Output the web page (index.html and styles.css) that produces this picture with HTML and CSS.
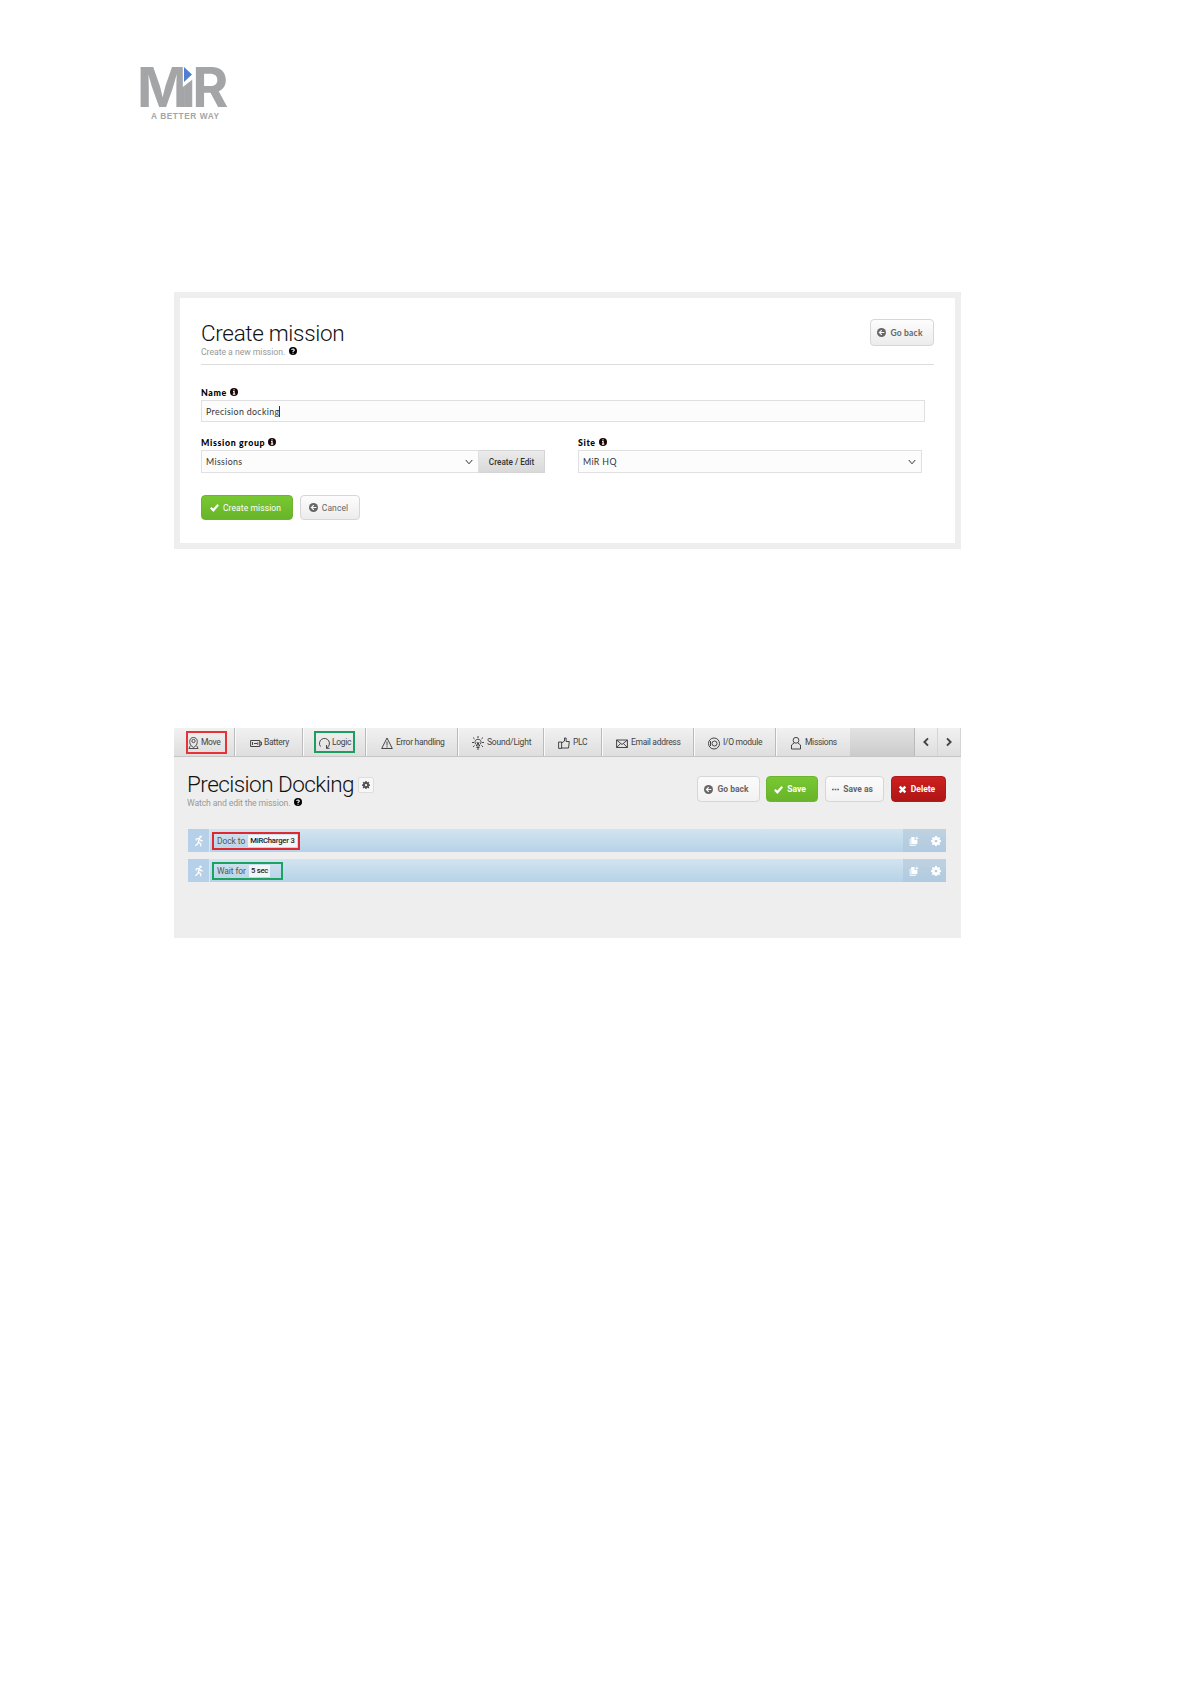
FILE: index.html
```
<!DOCTYPE html>
<html lang="en">
<head>
    <meta charset="UTF-8">
    <meta name="viewport" content="width=device-width, initial-scale=1.0">
    <title>Create mission</title>
    <link rel="stylesheet" href="styles.css">
</head>
<body>
    <!-- Shared icons -->
    <svg class="sprite" width="0" height="0">
        <symbol id="help" viewBox="0 0 16 16"><circle cx="8" cy="8" r="8"/><path d="M5.5 6.2a2.5 2.3 0 1 1 3.7 2Q8 8.800 8 10M8 11.300v2" fill="none" stroke="#fff" stroke-width="2.200"/></symbol>
        <symbol id="info" viewBox="0 0 16 16"><circle cx="8" cy="8" r="8"/><path d="M8 2.500v2.300M6 7h2.200v5M5.700 12.300h4.800" fill="none" stroke="#fff" stroke-width="2.200"/></symbol>
        <symbol id="back" viewBox="0 0 16 16"><circle cx="8" cy="8" r="8"/><path d="M13 8H5M8.500 3.800L4.300 8l4.200 4.200" fill="none" stroke="#f7f7f7" stroke-width="2.200"/></symbol>
        <symbol id="check" viewBox="0 0 16 16"><path d="M1.500 8.500L6 13 14.500 3" fill="none" stroke="currentColor" stroke-width="3.800"/></symbol>
        <symbol id="cross" viewBox="0 0 16 16"><path d="M3 3l10 10M13 3L3 13" fill="none" stroke="currentColor" stroke-width="4.400"/></symbol>
        <symbol id="dots" viewBox="0 0 16 16"><path d="M0 6.500h4v3H0zM6 6.500h4v3H6zM12 6.500h4v3h-4z"/></symbol>
        <symbol id="down" viewBox="0 0 16 16"><path d="M1.500 4L8 11.500 14.500 4" fill="none" stroke="currentColor" stroke-width="2"/></symbol>
        <symbol id="gear" viewBox="0 0 16 16"><path fill-rule="evenodd" d="M6.700 0h2.600l.4 2.100 1.400.6 1.800-1.200 1.800 1.800-1.200 1.800.6 1.400 2 .4v2.500l-2 .4-.6 1.400 1.200 1.800-1.800 1.800-1.800-1.200-1.400.6-.4 2H6.700l-.4-2-1.400-.6-1.800 1.200L1.300 13l1.200-1.800-.6-1.400L0 9.400V6.900l2-.4.600-1.400-1.200-1.800 1.800-1.800L5 2.700l1.300-.6zM8 5.800a2.300 2.300 0 1 0 0 4.600 2.300 2.300 0 0 0 0-4.600z"/></symbol>
        <symbol id="runner" viewBox="0 0 16 18"><circle cx="10.500" cy="2" r="2"/><path d="M3.500 8V5.800L8.500 4.800 7 11l3.500 2.200.5 4.300M7 10.500L5.500 14 2 16.500M9 6l2 2.500 3.500.5" fill="none" stroke="currentColor" stroke-width="2"/></symbol>
        <symbol id="copy" viewBox="0 0 16 18"><path d="M3 2h6v5h5v8H3z"/><path d="M1 5v12h10M10 4h6M13 1v6" fill="none" stroke="currentColor" stroke-width="1.500"/></symbol>
    </svg>

    <header class="logo">
        <svg width="100" height="76" viewBox="-4 -16 100 76">
            <text class="logo-name" x="-3" y="41" dx="0 -2.400 1.400">MiR</text>
            <path d="M42.800-2h10.300v15l-10.300 8z" fill="#fff"/>
            <path d="M44 1l8 7.500-8 7.500z" fill="#4f7fd0"/>
            <text class="logo-tag" x="11" y="53.300" textLength="68">A BETTER WAY</text>
        </svg>
    </header>

    <section class="create-panel">
        <div class="panel-head">
            <div>
                <h1>Create mission</h1>
                <p class="sub">Create a new mission. <svg class="ic-help"><use href="#help"/></svg></p>
            </div>
            <button class="btn btn-back"><svg class="ic"><use href="#back"/></svg>Go back</button>
        </div>
        <div class="field">
            <label>Name <svg class="ic-info"><use href="#info"/></svg></label>
            <div class="input name-input">Precision docking<span class="caret"></span></div>
        </div>
        <div class="field-row">
            <div class="field group-field">
                <label>Mission group <svg class="ic-info"><use href="#info"/></svg></label>
                <div class="select-wrap">
                    <div class="input select">Missions<svg class="ic-down"><use href="#down"/></svg></div>
                    <button class="edit">Create / Edit</button>
                </div>
            </div>
            <div class="field site-field">
                <label>Site <svg class="ic-info"><use href="#info"/></svg></label>
                <div class="input select">MiR HQ<svg class="ic-down"><use href="#down"/></svg></div>
            </div>
        </div>
        <div class="form-buttons">
            <button class="btn btn-green btn-create"><svg class="ic"><use href="#check"/></svg>Create mission</button>
            <button class="btn btn-cancel"><svg class="ic"><use href="#back"/></svg>Cancel</button>
        </div>
    </section>

    <section class="editor">
        <nav class="tabs">
            <div class="tab tab-move">
                <span class="mark mark-red"></span>
                <svg viewBox="0 0 12 14"><path d="M3 9.500C1 6 1.500 1 6 1s5 5 3 8.500L6 12zM2.500 10L1 13h10l-1.500-3"/><circle cx="6" cy="4.800" r="1.800"/></svg>Move
            </div>
            <div class="tab tab-battery">
                <svg viewBox="0 0 12 14"><path d="M.6 4.500h9.200v6H.6zM9.800 6h1.600v3H9.800M2.500 6v3M4 7.500h3M7.800 6.300v2.500"/></svg>Battery
            </div>
            <div class="tab tab-logic">
                <span class="mark mark-green"></span>
                <svg viewBox="0 0 12 14"><path d="M2.500 10.500A5 5 0 1 1 8.500 12M8.500 9v3.300h3"/></svg>Logic
            </div>
            <div class="tab tab-error">
                <svg viewBox="0 0 12 14"><path d="M6 2L.7 12.500h10.600zM6 5.500v4M6 10.300v1.200"/></svg>Error handling
            </div>
            <div class="tab tab-sound">
                <svg viewBox="0 0 12 14"><path d="M4.500 10V8.800a3 3 0 1 1 3 0V10zM4.500 11.500h3M5 13h2M6 0v2M1 1.500l1.600 1.500M11 1.500L9.400 3M0 6.500h2M10 6.500h2M1 11l1.500-1.500M11 11L9.500 9.500M5 6l1 3 1-3"/></svg>Sound/Light
            </div>
            <div class="tab tab-plc">
                <svg viewBox="0 0 12 14"><path d="M.6 6h3v6.400h-3zM3.600 7L6.500 5V2h1.600v3.500h3.200L10.500 12H3.600"/></svg>PLC
            </div>
            <div class="tab tab-email">
                <svg viewBox="0 0 12 14"><path d="M.6 4h10.800v7.500H.6zL6 8.500 11.400 4M.6 11.500l4-4M11.400 11.500l-4-4"/></svg>Email address
            </div>
            <div class="tab tab-io">
                <svg viewBox="0 0 12 14"><circle cx="6" cy="7.500" r="5.500"/><circle cx="6.500" cy="7.500" r="2.500"/><path d="M2.500 5v5"/></svg>I/O module
            </div>
            <div class="tab tab-missions">
                <svg viewBox="0 0 12 14"><circle cx="6" cy="4.300" r="2.900"/><path d="M4 7L1.500 9v4h9V9L8 7"/></svg>Missions
            </div>
            <div class="tab-gap"></div>
            <div class="tab-arrow"><svg viewBox="0 0 10 12"><path d="M7.500 1.500L3 6l4.500 4.500"/></svg></div>
            <div class="tab-arrow"><svg viewBox="0 0 10 12"><path d="M2.500 1.500L7 6l-4.500 4.500"/></svg></div>
        </nav>
        <div class="editor-head">
            <div>
                <h1>Precision Docking<button class="gear-btn"><svg><use href="#gear"/></svg></button></h1>
                <p class="sub">Watch and edit the mission. <svg class="ic-help"><use href="#help"/></svg></p>
            </div>
            <div class="actions">
                <button class="btn a-back"><svg class="ic"><use href="#back"/></svg>Go back</button>
                <button class="btn btn-green a-save"><svg class="ic"><use href="#check"/></svg>Save</button>
                <button class="btn a-saveas"><svg class="ic"><use href="#dots"/></svg>Save as</button>
                <button class="btn btn-red a-delete"><svg class="ic"><use href="#cross"/></svg>Delete</button>
            </div>
        </div>
        <div class="step">
            <div class="step-icon"><svg><use href="#runner"/></svg></div>
            <div class="step-text outline-red">Dock to <span class="chip">MiRCharger 3</span></div>
            <div class="step-tools"><svg><use href="#copy"/></svg><svg><use href="#gear"/></svg></div>
        </div>
        <div class="step">
            <div class="step-icon"><svg><use href="#runner"/></svg></div>
            <div class="step-text outline-green">Wait for <span class="chip">5 sec</span></div>
            <div class="step-tools"><svg><use href="#copy"/></svg><svg><use href="#gear"/></svg></div>
        </div>
    </section>
</body>
</html>
```
FILE: styles.css
```
* {
    margin: 0;
    padding: 0;
    box-sizing: border-box;
}

body {
    background: #fff;
    font-family: Roboto, "Liberation Sans", sans-serif;
    font-size: 8.5px;
    color: #333;
    min-height: 1684px;
}

.sprite {
    position: absolute;
}

svg {
    flex: none;
    fill: currentColor;
}

.logo {
    padding: 50px 0 0 136px;
    height: 292px;
}

.logo-name {
    font: 700 55px Inter, sans-serif;
    letter-spacing: -5px;
    fill: #a3a5a6;
}

.logo-tag {
    font: 700 8.3px "Liberation Sans", sans-serif;
    fill: #a3a5a6;
}

h1 {
    display: flex;
    align-items: center;
    font-size: 22.5px;
    font-weight: 300;
    line-height: 26px;
    letter-spacing: -0.33px;
    color: #111;
}

.sub {
    display: flex;
    align-items: center;
    gap: 4px;
    line-height: 12px;
    font-size: 8.7px;
    letter-spacing: -0.05px;
    color: #999;
}

.ic-help {
    width: 8px;
    height: 8px;
    color: #000;
    margin-top: -2px;
}

/* buttons */
.btn {
    display: flex;
    align-items: center;
    justify-content: center;
    gap: 4px;
    height: 26px;
    padding-right: 4px;
    border: 1px solid #d6d6d6;
    border-radius: 4px;
    background: linear-gradient(#fdfdfd, #ececec);
    font-family: inherit;
    font-size: 8.5px;
    font-weight: 500;
    color: #666;
    white-space: nowrap;
}

.ic {
    width: 9px;
    height: 9px;
}

.btn-green {
    background: linear-gradient(#78c832, #68b42a);
    border-color: #6cb62f;
    color: #fff;
}

.btn-red {
    background: linear-gradient(#cc2020, #b01515);
    border-color: #b01a1a;
    color: #fff;
}

/* create form */
.create-panel {
    width: 787px;
    height: 257px;
    margin-left: 174px;
    border: 6px solid #eee;
    padding: 21px 21px 0;
}

.panel-head {
    display: flex;
    justify-content: space-between;
    height: 46px;
    border-bottom: 1px solid #ddd;
}

.panel-head h1 {
    padding-top: 1px;
}

.btn-back {
    width: 64px;
    height: 27px;
    font-family: Lato, sans-serif;
    font-weight: 700;
    letter-spacing: 0.2px;
}

.field label {
    display: flex;
    align-items: center;
    gap: 3px;
    height: 13px;
    padding-bottom: 1px;
    line-height: 12px;
    font-family: Lato, sans-serif;
    font-size: 8.8px;
    font-weight: 900;
    letter-spacing: 0.65px;
    color: #000;
}

.ic-info {
    width: 8px;
    height: 8px;
    color: #1a0505;
    margin-top: -2px;
}

.panel-head + .field {
    margin-top: 22px;
}

.input {
    display: flex;
    align-items: center;
    height: 22px;
    padding-left: 4px;
    border: 1px solid #e0e0e0;
    background: #fcfcfc;
    font-family: Lato, sans-serif;
    font-size: 8.8px;
    letter-spacing: 0.35px;
    color: #333;
}

.name-input {
    width: 724px;
}

.caret {
    width: 1px;
    height: 11px;
    background: #333;
}

.field-row {
    display: flex;
    margin-top: 15px;
}

.group-field {
    width: 344px;
    margin-right: 33px;
}

.site-field {
    width: 344px;
}

.select-wrap {
    display: flex;
}

.select {
    flex: 1;
    height: 23px;
    justify-content: space-between;
    padding-right: 5px;
}

.ic-down {
    width: 8px;
    height: 8px;
}

.edit {
    width: 66px;
    border: 1px solid #d5d5d5;
    border-left: 0;
    background: linear-gradient(#ebebeb, #d9d9d9);
    font: 500 8.2px Roboto, sans-serif;
    color: #333;
}

.form-buttons {
    display: flex;
    gap: 7px;
    margin-top: 22px;
}

.form-buttons .btn {
    height: 25px;
    padding-right: 3px;
    font-weight: 400;
    letter-spacing: 0.1px;
}

.btn-create {
    width: 92px;
}

.btn-cancel {
    width: 60px;
}

/* mission editor */
.editor {
    width: 787px;
    height: 210px;
    margin: 179px 0 0 174px;
    background: #eee;
}

.tabs {
    display: flex;
    height: 29px;
    background: linear-gradient(#f1f1f1, #dedede);
    border-bottom: 1px solid #c6c6c6;
}

.tab {
    position: relative;
    display: flex;
    align-items: center;
    gap: 3px;
    border-right: 1px solid #bbb;
    box-shadow: 1px 0 #fafafa;
    font-size: 8.5px;
    letter-spacing: -0.3px;
    color: #444;
    white-space: nowrap;
}

.tab svg {
    width: 12px;
    height: 14px;
    fill: none;
    stroke: #333;
    stroke-width: 0.9;
    margin-top: 1px;
}

/* highlight frames drawn over the tabs */
.mark {
    position: absolute;
    top: 3px;
    left: 12px;
    width: 41px;
    height: 23px;
    border: 2px solid #e63338;
}

.mark-green {
    left: 11px;
    height: 22px;
    border-color: #1f9d61;
}

.tab-move { width: 61px; padding-left: 14px; gap: 2px; }
.tab-move svg { width: 11px; }
.tab-battery { width: 68px; padding-left: 15px; gap: 2px; }
.tab-logic { width: 63px; padding-left: 15px; gap: 2px; }
.tab-error { width: 92px; padding-left: 15px; }
.tab-sound { width: 86px; padding-left: 14px; letter-spacing: -0.2px; }
.tab-plc { width: 58px; padding-left: 14px; }
.tab-email { width: 92px; padding-left: 14px; }
.tab-io { width: 82px; padding-left: 14px; }
.tab-missions { width: 74px; padding-left: 14px; border-right: 0; box-shadow: none; }

.tab-gap {
    width: 65px;
    background: linear-gradient(#e2e2e2, #cbcbcb);
    border-right: 1px solid #bbb;
}

.tab-arrow {
    display: flex;
    align-items: center;
    justify-content: center;
    width: 23px;
    border-right: 1px solid #d5d5d5;
}

.tab-arrow svg {
    width: 8px;
    height: 10px;
    fill: none;
    stroke: #444;
    stroke-width: 2.4;
}

.editor-head {
    display: flex;
    justify-content: space-between;
    padding: 14px 15px 0 13px;
    height: 72px;
}

.editor-head h1 {
    letter-spacing: -0.55px;
}

.gear-btn {
    display: flex;
    align-items: center;
    justify-content: center;
    width: 16px;
    height: 16px;
    margin: 2px 0 0 4px;
    border: 1px solid #ddd;
    border-radius: 2px;
    background: #f7f7f7;
    color: #555;
}

.gear-btn svg {
    width: 8px;
    height: 8px;
}

.editor-head .sub {
    letter-spacing: -0.14px;
}

.actions {
    display: flex;
    margin-top: 5px;
}

.actions .btn {
    font-weight: 700;
}

.actions .btn:not(.btn-green):not(.btn-red) {
    background: linear-gradient(#fbfbfb, #f2f2f2);
}

.a-back { width: 63px; margin-right: 6px; }
.a-save { width: 52px; margin-right: 7px; }
.a-saveas { width: 59px; margin-right: 7px; }
.a-saveas .ic { width: 7px; height: 7px; }
.a-delete { width: 55px; }

.step {
    display: flex;
    align-items: center;
    width: 758px;
    height: 23px;
    margin: 0 0 7px 14px;
    border-radius: 2px;
    background: linear-gradient(#d2e4f0, #b6d2e8);
}

.step-icon {
    display: flex;
    align-items: center;
    justify-content: center;
    width: 22px;
    height: 23px;
    border-right: 1px solid #dce9f3;
    background: #b5d0e8;
    color: #fff;
}

.step-icon svg {
    width: 10px;
    height: 12px;
}

.step-text {
    display: flex;
    align-items: center;
    gap: 3px;
    height: 18px;
    margin-left: 2px;
    padding-left: 3px;
    border: 2px solid;
    color: #555;
    font-size: 8.5px;
    letter-spacing: -0.1px;
    white-space: nowrap;
}

.outline-red {
    width: 88px;
    border-color: #dc2a30;
}

.outline-green {
    width: 71px;
    border-color: #1ca362;
}

.chip {
    height: 12px;
    padding: 0 2px;
    background: #f2f6fa;
    font-size: 7.7px;
    font-weight: 500;
    letter-spacing: -0.22px;
    line-height: 12px;
    color: #222;
}

.step-tools {
    display: flex;
    align-items: center;
    justify-content: space-between;
    width: 43px;
    height: 23px;
    margin-left: auto;
    padding: 0 5px 0 6px;
    background: linear-gradient(#bfd2e1, #b0cae0);
    color: #fff;
}

.step-tools svg {
    width: 10px;
    height: 10px;
}
```
